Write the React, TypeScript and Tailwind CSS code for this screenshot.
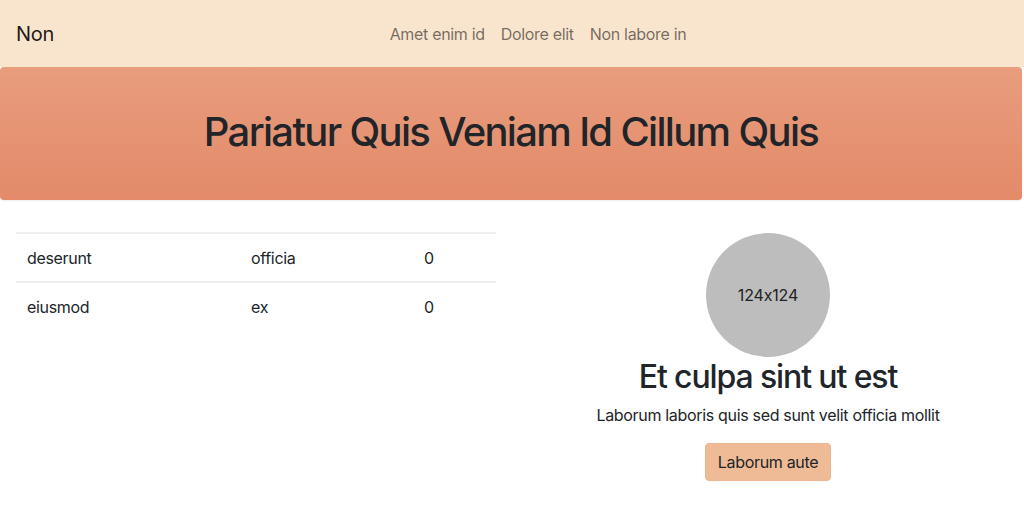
import React from "react";

const rows = [
  ["deserunt", "officia", "0"],
  ["eiusmod", "ex", "0"],
];

const App = () => {
  return (
    <div
      className="min-h-[512px] bg-white text-[#212529] tracking-[-0.02em] [font-feature-settings:'calt'_0]"
      style={{ fontFamily: "Inter, 'Noto Sans', sans-serif" }}
    >
      {/* Navbar */}
      <nav className="relative flex items-center h-[67px] px-4 bg-[#f9e4cd]">
        <span className="text-[20px] text-black/90">Non</span>
        <div className="absolute left-0 right-0 pl-[52px] flex justify-center gap-4 pointer-events-none">
          <a className="text-base text-black/55">Amet enim id</a>
          <a className="text-base text-black/55">Dolore elit</a>
          <a className="text-base text-black/55">Non labore in</a>
        </div>
      </nav>

      {/* Header */}
      <header className="mr-[2px] h-[133px] pb-1 flex items-center justify-center rounded-[4px] bg-gradient-to-b from-[#e89d7d] to-[#e38a69] shadow-[0_1px_2px_rgba(0,0,0,0.08)]">
        <h1 className="text-[40px] font-medium leading-tight tracking-[-0.042em]">
          Pariatur Quis Veniam Id Cillum Quis
        </h1>
      </header>

      {/* Content */}
      <div className="grid grid-cols-2 gap-8 px-4 pt-[32px]">
        <table className="w-full border-collapse self-start">
          <tbody>
            {rows.map((r, i) => (
              <tr key={i} className="border-t-2 border-[#eeeeee] h-[49px]">
                <td className="pl-[11px] w-[224px]">{r[0]}</td>
                <td className="pl-[11px] w-[173px]">{r[1]}</td>
                <td className="pl-[11px]">{r[2]}</td>
              </tr>
            ))}
          </tbody>
        </table>

        <div className="flex flex-col items-center">
          <div className="mt-px w-[124px] h-[124px] rounded-full bg-[#bdbdbd] flex items-center justify-center text-base tracking-[-0.01em] text-[#222]">
            124x124
          </div>
          <h2 className="text-[32px] font-medium leading-[1.2] mt-[1px] tracking-[-0.035em]">
            Et culpa sint ut est
          </h2>
          <p className="text-base mt-[7px]">
            Laborum laboris quis sed sunt velit officia mollit
          </p>
          <button className="mt-[16px] h-[38px] px-3 rounded-[4px] bg-[#efbb96] border border-[#ecb58e] text-base text-[#212529]">
            Laborum aute
          </button>
        </div>
      </div>
    </div>
  );
};

export default App;
